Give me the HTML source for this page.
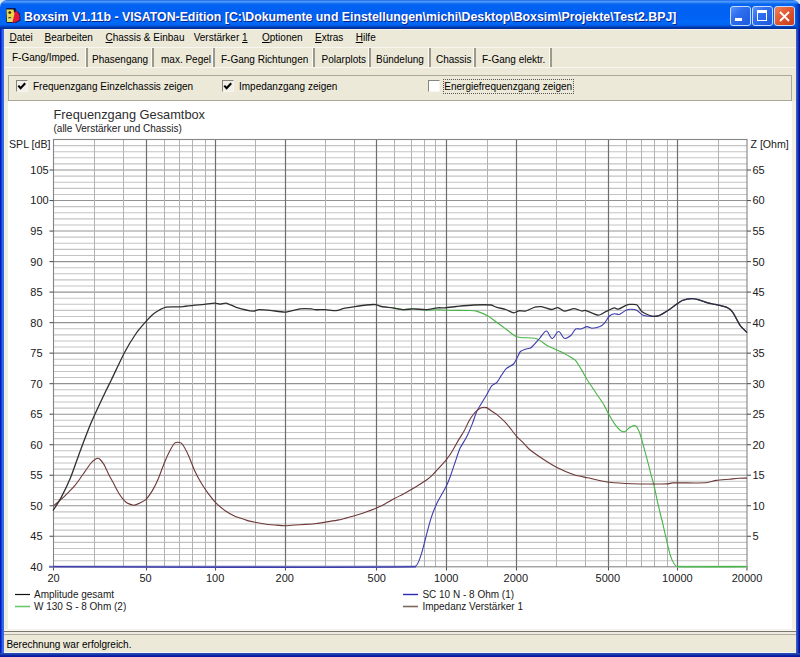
<!DOCTYPE html>
<html><head><meta charset="utf-8">
<style>
html,body{margin:0;padding:0}
body{width:800px;height:657px;overflow:hidden;position:relative;background:#ECE9D8;font-family:"Liberation Sans",sans-serif;font-size:10px;color:#000}
.abs{position:absolute}
.t{position:absolute;white-space:nowrap;line-height:1}
#title{left:0;top:0;width:800px;height:29px;border-radius:7px 7px 0 0;
background:linear-gradient(to bottom,#1d56d6 0px,#3d95ff 1px,#4b9bff 2px,#2479f6 3px,#0a66ee 4px,#0062f2 6px,#0060f2 12px,#0063f6 18px,#006af8 22px,#0064f2 25px,#0050d8 26px,#0040b8 27px,#00309a 28px,#00309a 29px)}
#ttext{left:24px;top:10px;font-weight:bold;font-size:13.4px;letter-spacing:0px;color:#fff;text-shadow:1px 1px 0 #0a1e8a;transform:scaleX(0.92);transform-origin:0 0}
.btn{position:absolute;top:6px;width:19px;height:18px;border:1px solid #c8dcfa;border-radius:3px;box-sizing:content-box}
.bb{background:linear-gradient(135deg,#5a94fa 0%,#3070f0 35%,#1c58dc 100%)}
.bc{background:linear-gradient(135deg,#f0805a 0%,#e05a32 45%,#c83c1a 100%)}
#lb{left:0;top:29px;width:4px;height:628px;background:linear-gradient(to right,#0019b8 0,#0020c8 1px,#2a5ee8 2px,#3a6ae8 3px,#3a6ae8 4px)}
#rb{left:796px;top:29px;width:4px;height:628px;background:linear-gradient(to left,#0808a0 0,#0810a8 1px,#1440c0 2px,#2a52c0 3px,#4a6ab8 4px)}
#bb{left:0;top:653px;width:800px;height:4px;background:linear-gradient(to top,#0818a0 0,#0818a0 1px,#1030a8 2px,#2848b0 3px,#2848b0 4px)}
.u{text-decoration:underline}
.sep{position:absolute;top:48px;width:2px;height:20px;background:#9d9a8c;border-left:1px solid #fbfaf6}
.cb{position:absolute;top:80px;width:10px;height:10px;border-top:1px solid #85837a;border-left:1px solid #85837a;border-right:1px solid #f6f5f0;border-bottom:1px solid #f6f5f0;background:#f1efe8;box-sizing:content-box}
</style></head><body>
<div class="abs" style="left:0;top:0;width:800px;height:10px;background:#d8e4f0"></div>
<div id="title" class="abs">
  <svg class="abs" style="left:4px;top:5px" width="20" height="20" viewBox="0 0 20 20">
    <path d="M2.5 3 L11.5 3 L12 5 L16 9 L16.5 15.5 L12 18 L3 18 L2 16 Z" fill="#101040" opacity="0.9"/>
    <path d="M10.5 7 L12.5 6 L15.5 10 L15.5 15 L11 17.5 L8 17.5 Z" fill="#e8153a"/>
    <path d="M2.5 4.5 L9.5 4.5 L10.5 9 L8.5 17 L3 17 Z" fill="#e6d848"/>
    <path d="M3 12 L8.5 12 L8 17 L3 17 Z" fill="#d8e870" opacity="0.8"/>
    <circle cx="5.8" cy="7.6" r="1.4" fill="#3a2410"/>
    <ellipse cx="5.8" cy="13" rx="1.6" ry="1.1" fill="#4a2a18"/>
    <path d="M4.6 13.6 L7 13.6" stroke="#ffd8a0" stroke-width="0.8"/>
  </svg>
  <div class="abs" style="left:795px;top:4px;width:5px;height:25px;background:linear-gradient(to left,#0028a8,#0048d0 3px,rgba(0,80,230,0) 5px)"></div>
  <div id="ttext" class="t">Boxsim V1.11b - VISATON-Edition [C:\Dokumente und Einstellungen\michi\Desktop\Boxsim\Projekte\Test2.BPJ]</div>
  <div class="btn bb" style="left:730px"><div class="abs" style="left:4px;top:11px;width:7px;height:3px;background:#fff"></div></div>
  <div class="btn bb" style="left:752px"><div class="abs" style="left:4px;top:3px;width:8px;height:7px;border:1px solid #fff;border-top-width:3px"></div></div>
  <div class="btn bc" style="left:774px">
    <svg class="abs" style="left:0;top:0" width="19" height="19"><path d="M5 5 L14 14 M14 5 L5 14" stroke="#fff" stroke-width="1.8"/></svg>
  </div>
</div>
<div id="lb" class="abs"></div><div id="rb" class="abs"></div><div id="bb" class="abs"></div>
<div class="abs" style="left:4px;top:29px;width:792px;height:1px;background:#f6f4ec"></div>
<!-- menu -->
<div class="t" style="left:9.4px;top:33px"><span class="u">D</span>atei</div>
<div class="t" style="left:44.5px;top:33px"><span class="u">B</span>earbeiten</div>
<div class="t" style="left:105.5px;top:33px"><span class="u">C</span>hassis &amp; Einbau</div>
<div class="t" style="left:193.7px;top:33px">Verstärker <span class="u">1</span></div>
<div class="t" style="left:262px;top:33px"><span class="u">O</span>ptionen</div>
<div class="t" style="left:315px;top:33px"><span class="u">E</span>xtras</div>
<div class="t" style="left:355.7px;top:33px"><span class="u">H</span>ilfe</div>
<div class="abs" style="left:4px;top:47px;width:792px;height:1px;background:#f8f6f0"></div>
<!-- tabs -->
<div class="t" style="left:12px;top:52.5px">F-Gang/Imped.</div>
<div class="sep" style="left:85px"></div>
<div class="t" style="left:92px;top:54.5px">Phasengang</div>
<div class="sep" style="left:151px"></div>
<div class="t" style="left:161px;top:54.5px">max. Pegel</div>
<div class="sep" style="left:212px"></div>
<div class="t" style="left:221px;top:54.5px">F-Gang Richtungen</div>
<div class="sep" style="left:312px"></div>
<div class="t" style="left:321.6px;top:54.5px">Polarplots</div>
<div class="sep" style="left:368px"></div>
<div class="t" style="left:376px;top:54.5px">Bündelung</div>
<div class="sep" style="left:428px"></div>
<div class="t" style="left:436px;top:54.5px">Chassis</div>
<div class="sep" style="left:473px"></div>
<div class="t" style="left:482px;top:54.5px">F-Gang elektr.</div>
<div class="sep" style="left:549px"></div>
<div class="abs" style="left:4px;top:67px;width:792px;height:1px;background:#f8f6f0"></div>
<!-- panel -->
<div class="abs" style="left:8px;top:75px;width:782px;height:24px;border:1px solid #aca899;background:#ECE9D8"></div>
<div class="cb" style="left:16px"><svg class="abs" style="left:0;top:0" width="11" height="11"><path d="M1.3 4.6 L3.6 7.2 L8.2 2.2" fill="none" stroke="#000" stroke-width="2.1"/></svg></div>
<div class="t" style="left:33px;top:82px">Frequenzgang Einzelchassis zeigen</div>
<div class="cb" style="left:221.5px"><svg class="abs" style="left:0;top:0" width="11" height="11"><path d="M1.3 4.6 L3.6 7.2 L8.2 2.2" fill="none" stroke="#000" stroke-width="2.1"/></svg></div>
<div class="t" style="left:239px;top:82px">Impedanzgang zeigen</div>
<div class="cb" style="left:427.5px;background:#fff"></div>
<div class="abs" style="left:443px;top:78.5px;width:129px;height:13px;border:1px dotted #555"></div>
<div class="t" style="left:444.3px;top:82px">Energiefrequenzgang zeigen</div>
<!-- chart panel -->
<div class="abs" style="left:8px;top:101px;width:784px;height:528px;background:#fff"></div>
<div class="abs" style="left:4px;top:101px;width:4px;height:531px;background:linear-gradient(to right,#f4f6ee 0,#e6ead6 1px,#eef0e2 3px)"></div>
<svg class="abs" width="800" height="657" viewBox="0 0 800 657" style="left:0;top:0"><style>.n{font-size:11px}</style><line x1="53.5" y1="560.68" x2="747.0" y2="560.68" stroke="#c4c4c4" stroke-width="1.1"/><line x1="53.5" y1="554.57" x2="747.0" y2="554.57" stroke="#c4c4c4" stroke-width="1.1"/><line x1="53.5" y1="548.47" x2="747.0" y2="548.47" stroke="#c4c4c4" stroke-width="1.1"/><line x1="53.5" y1="542.36" x2="747.0" y2="542.36" stroke="#c4c4c4" stroke-width="1.1"/><line x1="53.5" y1="536.26" x2="747.0" y2="536.26" stroke="#939393" stroke-width="1.1"/><line x1="53.5" y1="530.16" x2="747.0" y2="530.16" stroke="#c4c4c4" stroke-width="1.1"/><line x1="53.5" y1="524.05" x2="747.0" y2="524.05" stroke="#c4c4c4" stroke-width="1.1"/><line x1="53.5" y1="517.95" x2="747.0" y2="517.95" stroke="#c4c4c4" stroke-width="1.1"/><line x1="53.5" y1="511.84" x2="747.0" y2="511.84" stroke="#c4c4c4" stroke-width="1.1"/><line x1="53.5" y1="505.74" x2="747.0" y2="505.74" stroke="#939393" stroke-width="1.1"/><line x1="53.5" y1="499.64" x2="747.0" y2="499.64" stroke="#c4c4c4" stroke-width="1.1"/><line x1="53.5" y1="493.53" x2="747.0" y2="493.53" stroke="#c4c4c4" stroke-width="1.1"/><line x1="53.5" y1="487.43" x2="747.0" y2="487.43" stroke="#c4c4c4" stroke-width="1.1"/><line x1="53.5" y1="481.32" x2="747.0" y2="481.32" stroke="#c4c4c4" stroke-width="1.1"/><line x1="53.5" y1="475.22" x2="747.0" y2="475.22" stroke="#939393" stroke-width="1.1"/><line x1="53.5" y1="469.12" x2="747.0" y2="469.12" stroke="#c4c4c4" stroke-width="1.1"/><line x1="53.5" y1="463.01" x2="747.0" y2="463.01" stroke="#c4c4c4" stroke-width="1.1"/><line x1="53.5" y1="456.91" x2="747.0" y2="456.91" stroke="#c4c4c4" stroke-width="1.1"/><line x1="53.5" y1="450.80" x2="747.0" y2="450.80" stroke="#c4c4c4" stroke-width="1.1"/><line x1="53.5" y1="444.70" x2="747.0" y2="444.70" stroke="#939393" stroke-width="1.1"/><line x1="53.5" y1="438.60" x2="747.0" y2="438.60" stroke="#c4c4c4" stroke-width="1.1"/><line x1="53.5" y1="432.49" x2="747.0" y2="432.49" stroke="#c4c4c4" stroke-width="1.1"/><line x1="53.5" y1="426.39" x2="747.0" y2="426.39" stroke="#c4c4c4" stroke-width="1.1"/><line x1="53.5" y1="420.28" x2="747.0" y2="420.28" stroke="#c4c4c4" stroke-width="1.1"/><line x1="53.5" y1="414.18" x2="747.0" y2="414.18" stroke="#939393" stroke-width="1.1"/><line x1="53.5" y1="408.08" x2="747.0" y2="408.08" stroke="#c4c4c4" stroke-width="1.1"/><line x1="53.5" y1="401.97" x2="747.0" y2="401.97" stroke="#c4c4c4" stroke-width="1.1"/><line x1="53.5" y1="395.87" x2="747.0" y2="395.87" stroke="#c4c4c4" stroke-width="1.1"/><line x1="53.5" y1="389.76" x2="747.0" y2="389.76" stroke="#c4c4c4" stroke-width="1.1"/><line x1="53.5" y1="383.66" x2="747.0" y2="383.66" stroke="#939393" stroke-width="1.1"/><line x1="53.5" y1="377.56" x2="747.0" y2="377.56" stroke="#c4c4c4" stroke-width="1.1"/><line x1="53.5" y1="371.45" x2="747.0" y2="371.45" stroke="#c4c4c4" stroke-width="1.1"/><line x1="53.5" y1="365.35" x2="747.0" y2="365.35" stroke="#c4c4c4" stroke-width="1.1"/><line x1="53.5" y1="359.24" x2="747.0" y2="359.24" stroke="#c4c4c4" stroke-width="1.1"/><line x1="53.5" y1="353.14" x2="747.0" y2="353.14" stroke="#939393" stroke-width="1.1"/><line x1="53.5" y1="347.04" x2="747.0" y2="347.04" stroke="#c4c4c4" stroke-width="1.1"/><line x1="53.5" y1="340.93" x2="747.0" y2="340.93" stroke="#c4c4c4" stroke-width="1.1"/><line x1="53.5" y1="334.83" x2="747.0" y2="334.83" stroke="#c4c4c4" stroke-width="1.1"/><line x1="53.5" y1="328.72" x2="747.0" y2="328.72" stroke="#c4c4c4" stroke-width="1.1"/><line x1="53.5" y1="322.62" x2="747.0" y2="322.62" stroke="#939393" stroke-width="1.1"/><line x1="53.5" y1="316.52" x2="747.0" y2="316.52" stroke="#c4c4c4" stroke-width="1.1"/><line x1="53.5" y1="310.41" x2="747.0" y2="310.41" stroke="#c4c4c4" stroke-width="1.1"/><line x1="53.5" y1="304.31" x2="747.0" y2="304.31" stroke="#c4c4c4" stroke-width="1.1"/><line x1="53.5" y1="298.20" x2="747.0" y2="298.20" stroke="#c4c4c4" stroke-width="1.1"/><line x1="53.5" y1="292.10" x2="747.0" y2="292.10" stroke="#939393" stroke-width="1.1"/><line x1="53.5" y1="286.00" x2="747.0" y2="286.00" stroke="#c4c4c4" stroke-width="1.1"/><line x1="53.5" y1="279.89" x2="747.0" y2="279.89" stroke="#c4c4c4" stroke-width="1.1"/><line x1="53.5" y1="273.79" x2="747.0" y2="273.79" stroke="#c4c4c4" stroke-width="1.1"/><line x1="53.5" y1="267.68" x2="747.0" y2="267.68" stroke="#c4c4c4" stroke-width="1.1"/><line x1="53.5" y1="261.58" x2="747.0" y2="261.58" stroke="#939393" stroke-width="1.1"/><line x1="53.5" y1="255.48" x2="747.0" y2="255.48" stroke="#c4c4c4" stroke-width="1.1"/><line x1="53.5" y1="249.37" x2="747.0" y2="249.37" stroke="#c4c4c4" stroke-width="1.1"/><line x1="53.5" y1="243.27" x2="747.0" y2="243.27" stroke="#c4c4c4" stroke-width="1.1"/><line x1="53.5" y1="237.16" x2="747.0" y2="237.16" stroke="#c4c4c4" stroke-width="1.1"/><line x1="53.5" y1="231.06" x2="747.0" y2="231.06" stroke="#939393" stroke-width="1.1"/><line x1="53.5" y1="224.96" x2="747.0" y2="224.96" stroke="#c4c4c4" stroke-width="1.1"/><line x1="53.5" y1="218.85" x2="747.0" y2="218.85" stroke="#c4c4c4" stroke-width="1.1"/><line x1="53.5" y1="212.75" x2="747.0" y2="212.75" stroke="#c4c4c4" stroke-width="1.1"/><line x1="53.5" y1="206.64" x2="747.0" y2="206.64" stroke="#c4c4c4" stroke-width="1.1"/><line x1="53.5" y1="200.54" x2="747.0" y2="200.54" stroke="#939393" stroke-width="1.1"/><line x1="53.5" y1="194.44" x2="747.0" y2="194.44" stroke="#c4c4c4" stroke-width="1.1"/><line x1="53.5" y1="188.33" x2="747.0" y2="188.33" stroke="#c4c4c4" stroke-width="1.1"/><line x1="53.5" y1="182.23" x2="747.0" y2="182.23" stroke="#c4c4c4" stroke-width="1.1"/><line x1="53.5" y1="176.12" x2="747.0" y2="176.12" stroke="#c4c4c4" stroke-width="1.1"/><line x1="53.5" y1="170.02" x2="747.0" y2="170.02" stroke="#939393" stroke-width="1.1"/><line x1="53.5" y1="163.92" x2="747.0" y2="163.92" stroke="#c4c4c4" stroke-width="1.1"/><line x1="53.5" y1="157.81" x2="747.0" y2="157.81" stroke="#c4c4c4" stroke-width="1.1"/><line x1="53.5" y1="151.71" x2="747.0" y2="151.71" stroke="#c4c4c4" stroke-width="1.1"/><line x1="53.5" y1="145.60" x2="747.0" y2="145.60" stroke="#c4c4c4" stroke-width="1.1"/><line x1="94.50" y1="139.5" x2="94.50" y2="566.8" stroke="#b2b2b2" stroke-width="1"/><line x1="123.50" y1="139.5" x2="123.50" y2="566.8" stroke="#b2b2b2" stroke-width="1"/><line x1="164.50" y1="139.5" x2="164.50" y2="566.8" stroke="#b2b2b2" stroke-width="1"/><line x1="179.50" y1="139.5" x2="179.50" y2="566.8" stroke="#b2b2b2" stroke-width="1"/><line x1="192.50" y1="139.5" x2="192.50" y2="566.8" stroke="#b2b2b2" stroke-width="1"/><line x1="205.50" y1="139.5" x2="205.50" y2="566.8" stroke="#b2b2b2" stroke-width="1"/><line x1="255.50" y1="139.5" x2="255.50" y2="566.8" stroke="#b2b2b2" stroke-width="1"/><line x1="325.50" y1="139.5" x2="325.50" y2="566.8" stroke="#b2b2b2" stroke-width="1"/><line x1="354.50" y1="139.5" x2="354.50" y2="566.8" stroke="#b2b2b2" stroke-width="1"/><line x1="394.50" y1="139.5" x2="394.50" y2="566.8" stroke="#b2b2b2" stroke-width="1"/><line x1="411.50" y1="139.5" x2="411.50" y2="566.8" stroke="#b2b2b2" stroke-width="1"/><line x1="424.50" y1="139.5" x2="424.50" y2="566.8" stroke="#b2b2b2" stroke-width="1"/><line x1="435.50" y1="139.5" x2="435.50" y2="566.8" stroke="#b2b2b2" stroke-width="1"/><line x1="487.50" y1="139.5" x2="487.50" y2="566.8" stroke="#b2b2b2" stroke-width="1"/><line x1="556.50" y1="139.5" x2="556.50" y2="566.8" stroke="#b2b2b2" stroke-width="1"/><line x1="585.50" y1="139.5" x2="585.50" y2="566.8" stroke="#b2b2b2" stroke-width="1"/><line x1="626.50" y1="139.5" x2="626.50" y2="566.8" stroke="#b2b2b2" stroke-width="1"/><line x1="641.50" y1="139.5" x2="641.50" y2="566.8" stroke="#b2b2b2" stroke-width="1"/><line x1="654.50" y1="139.5" x2="654.50" y2="566.8" stroke="#b2b2b2" stroke-width="1"/><line x1="667.50" y1="139.5" x2="667.50" y2="566.8" stroke="#b2b2b2" stroke-width="1"/><line x1="718.50" y1="139.5" x2="718.50" y2="566.8" stroke="#b2b2b2" stroke-width="1"/><line x1="146.50" y1="139.5" x2="146.50" y2="566.8" stroke="#6e6e6e" stroke-width="1.2"/><line x1="215.50" y1="139.5" x2="215.50" y2="566.8" stroke="#6e6e6e" stroke-width="1.2"/><line x1="285.50" y1="139.5" x2="285.50" y2="566.8" stroke="#6e6e6e" stroke-width="1.2"/><line x1="376.50" y1="139.5" x2="376.50" y2="566.8" stroke="#6e6e6e" stroke-width="1.2"/><line x1="446.50" y1="139.5" x2="446.50" y2="566.8" stroke="#6e6e6e" stroke-width="1.2"/><line x1="516.50" y1="139.5" x2="516.50" y2="566.8" stroke="#6e6e6e" stroke-width="1.2"/><line x1="608.50" y1="139.5" x2="608.50" y2="566.8" stroke="#6e6e6e" stroke-width="1.2"/><line x1="677.50" y1="139.5" x2="677.50" y2="566.8" stroke="#6e6e6e" stroke-width="1.2"/><rect x="53.5" y="139.5" width="693.5" height="427.3" fill="none" stroke="#858585" stroke-width="1.1"/><line x1="49.5" y1="536.26" x2="53.5" y2="536.26" stroke="#555" stroke-width="1.1"/><line x1="747.0" y1="536.26" x2="751" y2="536.26" stroke="#555" stroke-width="1.1"/><line x1="49.5" y1="505.74" x2="53.5" y2="505.74" stroke="#555" stroke-width="1.1"/><line x1="747.0" y1="505.74" x2="751" y2="505.74" stroke="#555" stroke-width="1.1"/><line x1="49.5" y1="475.22" x2="53.5" y2="475.22" stroke="#555" stroke-width="1.1"/><line x1="747.0" y1="475.22" x2="751" y2="475.22" stroke="#555" stroke-width="1.1"/><line x1="49.5" y1="444.70" x2="53.5" y2="444.70" stroke="#555" stroke-width="1.1"/><line x1="747.0" y1="444.70" x2="751" y2="444.70" stroke="#555" stroke-width="1.1"/><line x1="49.5" y1="414.18" x2="53.5" y2="414.18" stroke="#555" stroke-width="1.1"/><line x1="747.0" y1="414.18" x2="751" y2="414.18" stroke="#555" stroke-width="1.1"/><line x1="49.5" y1="383.66" x2="53.5" y2="383.66" stroke="#555" stroke-width="1.1"/><line x1="747.0" y1="383.66" x2="751" y2="383.66" stroke="#555" stroke-width="1.1"/><line x1="49.5" y1="353.14" x2="53.5" y2="353.14" stroke="#555" stroke-width="1.1"/><line x1="747.0" y1="353.14" x2="751" y2="353.14" stroke="#555" stroke-width="1.1"/><line x1="49.5" y1="322.62" x2="53.5" y2="322.62" stroke="#555" stroke-width="1.1"/><line x1="747.0" y1="322.62" x2="751" y2="322.62" stroke="#555" stroke-width="1.1"/><line x1="49.5" y1="292.10" x2="53.5" y2="292.10" stroke="#555" stroke-width="1.1"/><line x1="747.0" y1="292.10" x2="751" y2="292.10" stroke="#555" stroke-width="1.1"/><line x1="49.5" y1="261.58" x2="53.5" y2="261.58" stroke="#555" stroke-width="1.1"/><line x1="747.0" y1="261.58" x2="751" y2="261.58" stroke="#555" stroke-width="1.1"/><line x1="49.5" y1="231.06" x2="53.5" y2="231.06" stroke="#555" stroke-width="1.1"/><line x1="747.0" y1="231.06" x2="751" y2="231.06" stroke="#555" stroke-width="1.1"/><line x1="49.5" y1="200.54" x2="53.5" y2="200.54" stroke="#555" stroke-width="1.1"/><line x1="747.0" y1="200.54" x2="751" y2="200.54" stroke="#555" stroke-width="1.1"/><line x1="49.5" y1="170.02" x2="53.5" y2="170.02" stroke="#555" stroke-width="1.1"/><line x1="747.0" y1="170.02" x2="751" y2="170.02" stroke="#555" stroke-width="1.1"/><line x1="49.5" y1="566.78" x2="53.5" y2="566.78" stroke="#555" stroke-width="1.1"/><line x1="53.50" y1="566.8" x2="53.50" y2="570.5" stroke="#555" stroke-width="1.1"/><line x1="146.50" y1="566.8" x2="146.50" y2="570.5" stroke="#555" stroke-width="1.1"/><line x1="215.50" y1="566.8" x2="215.50" y2="570.5" stroke="#555" stroke-width="1.1"/><line x1="285.50" y1="566.8" x2="285.50" y2="570.5" stroke="#555" stroke-width="1.1"/><line x1="376.50" y1="566.8" x2="376.50" y2="570.5" stroke="#555" stroke-width="1.1"/><line x1="446.50" y1="566.8" x2="446.50" y2="570.5" stroke="#555" stroke-width="1.1"/><line x1="516.50" y1="566.8" x2="516.50" y2="570.5" stroke="#555" stroke-width="1.1"/><line x1="608.50" y1="566.8" x2="608.50" y2="570.5" stroke="#555" stroke-width="1.1"/><line x1="677.50" y1="566.8" x2="677.50" y2="570.5" stroke="#555" stroke-width="1.1"/><line x1="747.00" y1="566.8" x2="747.00" y2="570.5" stroke="#555" stroke-width="1.1"/><line x1="49" y1="566.8" x2="416" y2="566.8" stroke="#6e6eb4" stroke-width="2"/><line x1="677" y1="566.8" x2="747" y2="566.8" stroke="#8cc48c" stroke-width="2"/><path d="M392.50 307.80C394.99 308.22 401.28 309.58 403.80 309.70C405.88 309.80 411.12 308.75 413.20 308.80C416.10 308.86 423.40 310.08 426.30 310.20C428.79 310.30 435.11 309.79 437.60 309.80C439.67 309.81 444.93 310.26 447.00 310.30C452.06 310.41 464.94 310.36 470.00 310.50C471.44 310.54 475.13 310.68 476.50 311.10C479.11 311.90 485.50 314.70 487.90 316.00C489.81 317.04 494.24 320.42 496.00 321.70C498.18 323.28 503.65 327.39 505.80 329.00C507.94 330.60 513.19 334.96 515.50 336.30C516.46 336.86 519.30 337.39 520.40 337.50C523.60 337.83 531.82 337.83 535.00 338.30C536.16 338.47 538.89 339.80 539.90 340.40C541.77 341.52 546.08 345.06 548.00 346.10C550.75 347.58 558.18 350.46 561.00 351.80C562.49 352.51 566.18 354.56 567.60 355.40C569.30 356.41 573.82 358.79 575.20 360.20C576.90 361.94 580.03 367.33 581.30 369.40C582.71 371.69 585.97 377.72 587.40 380.00C589.32 383.07 594.50 390.69 596.50 393.70C598.17 396.21 602.56 402.51 604.10 405.10C605.25 407.05 607.59 412.33 608.70 414.30C609.95 416.51 613.32 422.04 614.80 424.10C615.84 425.54 618.70 429.11 620.10 430.20C620.95 430.86 623.67 432.11 624.70 431.80C626.18 431.35 628.65 427.95 630.00 427.20C631.09 426.59 634.37 425.27 635.50 425.80C636.84 426.43 638.49 430.15 639.10 431.50C639.91 433.32 641.34 438.19 641.90 440.10C642.55 442.29 644.01 447.90 644.60 450.10C645.41 453.11 647.51 460.78 648.30 463.80C649.03 466.57 650.77 473.63 651.50 476.40C652.00 478.30 653.45 483.09 653.90 485.00C654.95 489.47 657.27 500.93 658.30 505.40C659.23 509.44 661.84 519.67 662.80 523.70C663.67 527.37 665.73 536.73 666.60 540.40C667.40 543.77 669.34 552.40 670.40 555.70C671.02 557.61 673.12 562.31 674.20 564.00C674.67 564.74 676.42 566.47 677.30 566.50C692.62 567.03 731.67 566.50 747.00 566.50" fill="none" stroke="#48b448" stroke-width="1.1"/><path d="M53.00 566.50C132.64 566.50 335.40 568.90 415.00 566.50C417.76 566.42 419.94 557.99 420.90 555.40C422.35 551.47 424.80 541.05 425.90 537.00C427.00 532.95 429.60 522.59 430.90 518.60C432.00 515.21 435.27 506.72 436.80 503.50C438.60 499.71 444.12 490.55 446.00 486.80C447.08 484.65 449.36 478.96 450.20 476.70C451.39 473.50 454.08 465.23 455.20 462.00C456.26 458.94 458.76 451.05 460.10 448.10C461.21 445.66 465.10 440.00 466.30 437.60C467.81 434.60 471.15 426.72 472.40 423.60C473.47 420.93 475.61 413.92 476.80 411.30C477.73 409.25 480.84 404.43 482.00 402.50C483.15 400.58 486.17 395.74 487.30 393.80C488.30 392.08 490.42 387.42 491.70 385.90C492.59 384.85 495.97 383.42 496.90 382.40C498.13 381.06 500.27 376.90 501.30 375.40C502.38 373.82 505.09 369.70 506.50 368.40C507.85 367.15 512.29 365.29 513.60 364.00C514.70 362.91 516.36 359.26 517.10 357.90C517.86 356.51 519.31 352.65 520.40 351.50C521.22 350.64 524.19 349.70 525.30 349.30C526.53 348.86 529.97 348.50 531.00 347.70C533.29 345.93 537.94 340.13 539.90 338.00C541.32 336.46 544.30 330.91 546.40 331.00C548.47 331.08 550.03 338.42 552.10 338.50C554.20 338.59 556.50 331.53 558.60 331.50C560.55 331.47 562.45 337.69 564.30 338.30C565.78 338.79 569.59 336.48 570.80 335.50C572.19 334.37 574.21 329.99 575.70 329.00C576.60 328.40 579.55 329.22 580.60 329.00C582.09 328.69 585.58 326.71 587.10 326.60C588.23 326.52 590.87 328.20 592.00 328.20C593.79 328.20 598.35 327.30 600.00 326.60C601.22 326.08 603.81 323.79 604.70 322.80C605.92 321.44 608.16 317.25 609.50 316.00C610.37 315.19 613.22 313.88 614.40 313.70C615.46 313.54 618.18 314.81 619.20 314.50C620.89 313.99 624.39 310.93 626.00 310.20C627.00 309.75 629.80 309.20 630.90 309.20C632.19 309.20 635.54 309.62 636.70 310.20C638.18 310.94 640.95 314.41 642.50 315.00C644.70 315.83 650.75 316.31 653.10 316.40C654.41 316.45 657.78 316.07 659.00 315.60C660.82 314.90 665.06 312.26 666.70 311.20C668.89 309.79 674.26 305.88 676.40 304.40C677.67 303.53 680.76 301.04 682.20 300.50C684.24 299.74 689.73 298.65 691.90 298.60C693.65 298.56 698.01 299.64 699.70 300.10C701.43 300.57 705.67 302.32 707.40 302.80C709.09 303.27 713.49 304.00 715.20 304.40C717.76 304.99 724.39 306.24 726.80 307.30C728.31 307.97 731.62 310.76 732.60 312.10C734.63 314.87 738.32 322.89 740.30 325.70C741.51 327.42 745.53 331.00 747.00 332.50" fill="none" stroke="#3c3cb0" stroke-width="1.1"/><path d="M53.50 505.80C54.31 505.12 56.39 503.39 57.20 502.70C58.37 501.71 61.38 499.25 62.50 498.20C64.22 496.58 68.45 492.30 70.10 490.60C71.21 489.46 73.98 486.52 75.00 485.30C76.08 484.01 78.62 480.56 79.60 479.20C80.79 477.55 83.73 473.27 84.90 471.60C86.07 469.93 88.93 465.59 90.20 464.00C90.94 463.08 93.05 460.91 94.00 460.20C94.75 459.64 96.87 458.41 97.80 458.30C98.37 458.23 99.70 459.10 100.10 459.50C101.06 460.46 103.21 463.22 103.90 464.40C105.07 466.41 107.45 471.83 108.50 473.90C109.45 475.77 112.01 480.45 113.00 482.30C114.34 484.81 117.54 491.32 119.10 493.70C120.43 495.72 124.20 500.70 126.10 502.20C127.51 503.31 131.90 505.20 133.70 505.20C135.50 505.20 139.68 502.97 141.30 502.20C142.41 501.67 145.24 500.19 146.10 499.30C147.69 497.66 151.04 492.87 152.20 490.90C153.73 488.32 157.11 481.45 158.30 478.70C159.80 475.24 162.95 466.17 164.40 462.70C165.61 459.81 168.92 452.56 170.40 449.80C171.26 448.19 173.57 444.03 175.00 442.90C175.80 442.27 178.61 442.29 179.60 442.50C180.38 442.66 182.15 443.84 182.60 444.50C184.20 446.85 187.51 453.31 188.70 455.90C190.20 459.18 193.30 467.82 194.80 471.10C195.99 473.69 199.43 480.06 200.90 482.50C202.45 485.08 206.71 491.47 208.50 493.90C210.06 496.01 214.25 501.24 216.10 503.10C217.94 504.95 223.07 509.20 225.20 510.70C227.11 512.05 232.31 514.96 234.40 516.00C235.58 516.59 238.76 517.66 240.00 518.10C241.64 518.68 245.83 520.13 247.50 520.60C249.13 521.06 253.34 521.98 255.00 522.30C257.19 522.73 262.79 523.70 265.00 524.00C267.19 524.30 272.80 524.80 275.00 525.00C277.20 525.20 282.79 525.80 285.00 525.80C287.16 525.80 292.64 525.15 294.80 525.00C297.09 524.84 302.91 524.56 305.20 524.40C307.69 524.23 314.02 523.78 316.50 523.50C318.49 523.27 323.52 522.42 325.50 522.10C328.47 521.62 336.04 520.46 339.00 519.90C340.34 519.65 343.69 518.75 345.00 518.40C347.07 517.85 352.35 516.42 354.40 515.80C356.86 515.06 363.08 513.06 365.50 512.20C367.95 511.33 374.09 508.88 376.50 507.90C377.83 507.36 381.22 505.97 382.50 505.30C385.19 503.90 391.83 499.94 394.50 498.50C396.34 497.50 401.15 495.18 403.00 494.20C404.56 493.38 408.48 491.19 410.00 490.30C411.87 489.21 416.57 486.35 418.40 485.20C420.26 484.04 425.03 481.10 426.80 479.80C428.16 478.80 431.39 475.98 432.60 474.80C434.15 473.29 437.84 469.20 439.30 467.60C440.79 465.96 444.63 461.83 446.00 460.10C447.40 458.33 450.70 453.62 451.90 451.70C453.41 449.28 456.85 442.86 458.30 440.40C459.53 438.31 462.93 433.13 464.10 431.00C465.28 428.85 467.81 423.14 469.00 421.00C469.83 419.50 472.26 415.86 473.30 414.50C474.00 413.59 476.02 411.44 476.90 410.70C477.77 409.96 480.11 408.15 481.20 407.80C482.33 407.44 485.46 407.25 486.60 407.60C487.85 407.99 490.41 410.27 491.50 411.00C492.48 411.66 495.10 413.14 496.00 413.90C498.41 415.92 504.37 421.29 506.50 423.60C508.82 426.12 513.96 433.20 516.20 435.80C517.44 437.24 520.98 440.54 522.30 441.90C523.80 443.44 527.35 447.63 529.00 449.00C531.81 451.34 539.44 456.69 542.50 458.70C545.72 460.81 554.07 465.95 557.50 467.70C561.02 469.50 570.25 473.54 574.00 474.80C576.88 475.77 584.53 477.15 587.50 477.80C591.79 478.74 602.66 481.34 607.00 482.00C610.93 482.60 621.03 483.26 625.00 483.50C628.30 483.70 636.70 483.97 640.00 484.00C646.05 484.06 661.45 484.10 667.50 483.90C668.62 483.86 671.38 482.93 672.50 482.90C679.65 482.69 697.86 483.21 705.00 482.80C707.54 482.66 713.79 480.77 716.30 480.40C719.18 479.98 726.60 479.47 729.50 479.20C731.59 479.01 736.90 478.43 739.00 478.30C740.76 478.19 745.24 478.14 747.00 478.10" fill="none" stroke="#6e3838" stroke-width="1.1"/><path d="M53.00 510.60C54.69 507.92 59.21 501.20 60.70 498.40C63.06 493.97 68.59 482.44 70.50 477.80C72.93 471.87 78.18 456.41 80.40 450.40C81.88 446.38 85.74 436.19 87.30 432.20C88.36 429.50 91.11 422.64 92.30 420.00C95.29 413.36 103.18 396.58 106.30 390.00C107.36 387.78 110.23 382.21 111.30 380.00C114.21 374.01 121.28 358.59 124.40 352.70C126.65 348.45 132.97 337.96 135.70 334.00C137.65 331.17 143.32 324.47 145.60 321.90C147.32 319.96 151.79 315.02 153.90 313.50C156.36 311.73 163.16 307.84 166.10 307.10C169.06 306.35 176.95 307.09 180.00 306.90C182.90 306.72 190.21 305.70 193.10 305.40C195.58 305.15 201.92 304.66 204.40 304.40C206.67 304.16 212.42 303.14 214.70 303.10C215.95 303.08 219.05 304.10 220.30 304.10C221.57 304.10 224.75 302.85 226.00 303.10C228.40 303.58 233.95 306.60 236.30 307.30C239.96 308.39 249.41 310.80 253.20 311.20C254.47 311.34 257.53 309.77 258.80 309.70C261.26 309.57 267.54 310.07 270.00 310.30C273.31 310.60 281.68 312.27 285.00 312.10C288.37 311.93 296.65 309.22 300.00 308.80C302.47 308.49 308.82 308.65 311.30 308.80C312.14 308.85 314.16 309.65 315.00 309.70C317.20 309.84 322.80 309.61 325.00 309.70C327.49 309.81 333.81 310.77 336.30 310.60C338.02 310.48 342.12 308.77 343.80 308.40C345.82 307.95 351.05 307.21 353.10 306.90C356.00 306.46 363.38 305.30 366.30 305.00C368.36 304.79 373.64 304.39 375.70 304.60C376.99 304.73 380.02 306.26 381.30 306.50C383.74 306.96 390.04 307.45 392.50 307.80C395.00 308.15 401.28 309.58 403.80 309.70C405.88 309.80 411.12 308.80 413.20 308.80C416.09 308.80 423.41 309.82 426.30 309.70C428.82 309.60 435.09 308.05 437.60 307.80C439.24 307.63 443.45 307.91 445.10 307.80C447.57 307.63 453.83 306.75 456.30 306.50C460.04 306.13 469.55 305.16 473.30 305.00C477.21 304.83 487.20 304.64 491.10 305.00C492.27 305.11 494.88 306.76 496.00 307.10C498.12 307.75 503.68 308.83 505.80 309.50C507.63 310.08 511.99 312.61 513.90 312.80C515.06 312.92 517.65 310.97 518.80 310.80C520.22 310.59 523.90 311.42 525.30 311.10C527.55 310.59 532.77 307.71 535.00 307.10C536.38 306.72 540.08 306.49 541.50 306.70C543.72 307.03 549.06 309.38 551.30 309.50C552.79 309.58 556.32 307.42 557.80 307.60C559.41 307.80 562.68 310.99 564.30 311.10C566.51 311.25 571.88 308.70 574.10 308.70C575.96 308.70 580.36 310.84 582.20 311.10C582.92 311.20 584.70 310.12 585.40 310.30C588.38 311.05 595.43 315.07 598.50 315.20C600.49 315.28 604.79 312.03 606.60 311.20C608.29 310.42 612.56 308.21 614.40 307.90C615.29 307.75 617.42 309.40 618.30 309.20C620.15 308.78 624.25 306.03 626.00 305.30C626.81 304.96 629.02 304.44 629.90 304.40C631.40 304.33 635.41 304.04 636.70 304.80C638.22 305.69 640.20 310.01 641.50 311.20C642.58 312.19 645.96 313.90 647.30 314.50C648.53 315.05 651.76 316.27 653.10 316.40C654.40 316.52 657.78 316.07 659.00 315.60C660.82 314.90 665.06 312.26 666.70 311.20C668.89 309.79 674.26 305.88 676.40 304.40C677.67 303.53 680.76 301.04 682.20 300.50C684.24 299.74 689.73 298.65 691.90 298.60C693.65 298.56 698.01 299.64 699.70 300.10C701.43 300.57 705.67 302.32 707.40 302.80C709.09 303.27 713.49 304.00 715.20 304.40C717.76 304.99 724.39 306.24 726.80 307.30C728.31 307.97 731.62 310.76 732.60 312.10C734.63 314.87 738.32 322.89 740.30 325.70C741.51 327.42 745.53 331.00 747.00 332.50" fill="none" stroke="#303030" stroke-width="1.3"/><g font-family="Liberation Sans, sans-serif" font-size="10" fill="#202020"><text x="30.3" y="540.2" class="n">45</text><text x="752.5" y="540.2" class="n">5</text><text x="30.3" y="509.6" class="n">50</text><text x="752.5" y="509.6" class="n">10</text><text x="30.3" y="479.1" class="n">55</text><text x="752.5" y="479.1" class="n">15</text><text x="30.3" y="448.6" class="n">60</text><text x="752.5" y="448.6" class="n">20</text><text x="30.3" y="418.1" class="n">65</text><text x="752.5" y="418.1" class="n">25</text><text x="30.3" y="387.6" class="n">70</text><text x="752.5" y="387.6" class="n">30</text><text x="30.3" y="357.0" class="n">75</text><text x="752.5" y="357.0" class="n">35</text><text x="30.3" y="326.5" class="n">80</text><text x="752.5" y="326.5" class="n">40</text><text x="30.3" y="296.0" class="n">85</text><text x="752.5" y="296.0" class="n">45</text><text x="30.3" y="265.5" class="n">90</text><text x="752.5" y="265.5" class="n">50</text><text x="30.3" y="235.0" class="n">95</text><text x="752.5" y="235.0" class="n">55</text><text x="30.3" y="204.4" class="n">100</text><text x="752.5" y="204.4" class="n">60</text><text x="30.3" y="173.9" class="n">105</text><text x="752.5" y="173.9" class="n">65</text><text x="30.3" y="570.7" class="n">40</text><text x="53.5" y="582.3" text-anchor="middle" class="n">20</text><text x="145.5" y="582.3" text-anchor="middle" class="n">50</text><text x="215.1" y="582.3" text-anchor="middle" class="n">100</text><text x="284.7" y="582.3" text-anchor="middle" class="n">200</text><text x="376.7" y="582.3" text-anchor="middle" class="n">500</text><text x="446.2" y="582.3" text-anchor="middle" class="n">1000</text><text x="515.8" y="582.3" text-anchor="middle" class="n">2000</text><text x="607.8" y="582.3" text-anchor="middle" class="n">5000</text><text x="677.4" y="582.3" text-anchor="middle" class="n">10000</text><text x="747.0" y="582.3" text-anchor="middle" class="n">20000</text><text x="9" y="147.5" style="font-size:10.6px">SPL [dB]</text><text x="750.5" y="147.5" style="font-size:10.6px">Z [Ohm]</text><text x="53.5" y="118.5" style="font-size:12.8px;fill:#2e2e2e">Frequenzgang Gesamtbox</text><text x="53.5" y="132">(alle Verstärker und Chassis)</text><line x1="15" y1="594.5" x2="30" y2="594.5" stroke="#111" stroke-width="1.2"/><line x1="15" y1="606.5" x2="30" y2="606.5" stroke="#6cc86c" stroke-width="1.6"/><line x1="403" y1="594.5" x2="418" y2="594.5" stroke="#2a2ab4" stroke-width="1.4"/><line x1="403" y1="606.5" x2="418" y2="606.5" stroke="#7a6a5a" stroke-width="1.6"/><text x="34" y="598">Amplitude gesamt</text><text x="34" y="610">W 130 S - 8 Ohm (2)</text><text x="422.4" y="598">SC 10 N - 8 Ohm (1)</text><text x="422.4" y="610">Impedanz Verstärker 1</text></g></svg>
<!-- status -->
<div class="abs" style="left:4px;top:629px;width:792px;height:2px;background:#f6f4ee"></div>
<div class="abs" style="left:4px;top:631px;width:792px;height:1px;background:#7a7868"></div>
<div class="abs" style="left:4px;top:632px;width:792px;height:2px;background:#eeece2"></div>
<div class="abs" style="left:4px;top:634px;width:792px;height:1px;background:#b0ac9e"></div>
<div class="abs" style="left:4px;top:652px;width:792px;height:1px;background:#eef6fa"></div>
<div class="abs" style="left:792px;top:101px;width:4px;height:528px;background:#f3efe6"></div>
<div class="t" style="left:6.4px;top:640px">Berechnung war erfolgreich.</div>
</body></html>
